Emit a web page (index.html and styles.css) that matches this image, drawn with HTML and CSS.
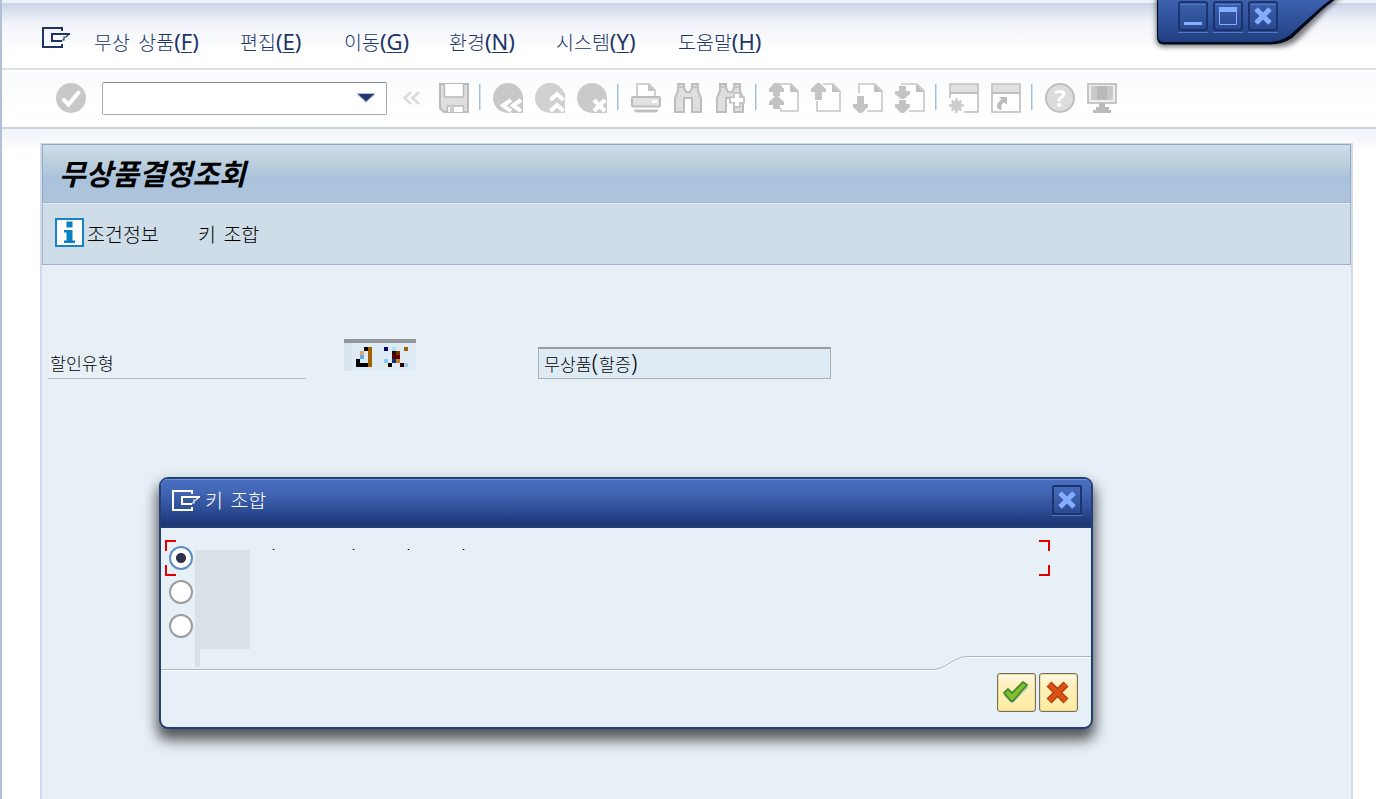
FILE: index.html
```html
<!DOCTYPE html>
<html lang="ko">

<head>
    <meta charset="UTF-8">
    <meta name="viewport" content="width=device-width, initial-scale=1.0">
    <title>무상품결정조회</title>
    <link rel="stylesheet" href="styles.css">
</head>
<body>
    <div class="window">
        <nav class="menubar">
            <svg class="menu-icon" width="28" height="22" viewBox="0 0 28 22" fill="none" stroke="currentColor" stroke-width="2">
                <path d="M20 4V1H1V20H20V17M28 7H10V14H20" />
                <path d="M27 7L24 10H22V13H20" stroke-width="1.2" />
            </svg>
            <ul class="menu">
                <li>무상 상품<b>(<u>F</u>)</b></li>
                <li>편집<b>(<u>E</u>)</b></li>
                <li>이동<b>(<u>G</u>)</b></li>
                <li>환경<b>(<u>N</u>)</b></li>
                <li>시스템<b>(<u>Y</u>)</b></li>
                <li>도움말<b>(<u>H</u>)</b></li>
            </ul>
        </nav>

        <div class="toolbar">
            <svg class="enter" viewBox="0 0 30 30"><circle cx="15" cy="15" r="15" fill="#c8c8c8" /><path d="M8 17L12.500 21.500L22.500 9.500" fill="none" stroke="#fff" stroke-width="4" stroke-linecap="round" /></svg>
            <div class="command">
                <svg width="18" height="10" viewBox="0 0 18 10"><path d="M0 0H18V2L14 5L9 10L4 5L0 2Z" fill="#1f3a70" opacity=".3" /><path d="M1 1H17L14 4L9 8.500L4 4Z" fill="#1f3a70" /></svg>
            </div>
            <svg class="collapse" viewBox="0 0 20 16" fill="none" stroke="#dadada" stroke-width="2.6"><path d="M9 2L2.500 8L9 14M17 2L10.500 8L17 14" /></svg>
            <svg class="icon save" viewBox="0 0 30 30"><path d="M1 1H29V29H5L1 25Z" fill="#dedede" stroke="#bbb" stroke-width="2" /><path d="M5.500 1V14H24.500V1M8.500 29V23H24.500V29" fill="#fff" stroke="#bbb" stroke-width="1.500" /><path d="M11 24H15V29H11Z" fill="#ccc" /></svg>
            <span class="sep"></span>
            <svg class="icon" viewBox="0 0 30 30"><circle cx="15" cy="15" r="15" fill="#c8c8c8" /><path d="M19 14L9 22L19 30H30V14Z" fill="#c8c8c8" /><path d="M18 17L10 22.500L18 28M28 17L20 22.500L28 28" fill="none" stroke="#fff" stroke-width="4" /></svg>
            <svg class="icon" viewBox="0 0 30 30"><circle cx="15" cy="15" r="15" fill="#d0d0d0" /><path d="M14 10H30V30H14Z" fill="#d0d0d0" /><path d="M15.500 17L22 11L28.500 17M15.500 28L22 22L28.500 28" fill="none" stroke="#fff" stroke-width="4" /></svg>
            <svg class="icon" viewBox="0 0 30 30"><circle cx="15" cy="15" r="15" fill="#cacaca" /><path d="M16 16H30V30H16Z" fill="#cacaca" /><path d="M17 17L28 28M28 17L17 28" fill="none" stroke="#fff" stroke-width="4.500" /></svg>
            <span class="sep"></span>
            <svg class="icon" viewBox="0 0 30 30"><path d="M6 14V1H18L24 7V14" fill="#fff" stroke="#c4c4c4" stroke-width="1.500" /><path d="M17 1V8H24Z" fill="#c4c4c4" /><rect x="1" y="14" width="28" height="9.500" rx="1" fill="#e2e2e2" stroke="#bdbdbd" stroke-width="2" /><rect x="21" y="17" width="5" height="3" fill="#fff" /><path d="M3 26.500H27V28L25 29.500H6L3 28Z" fill="#c0c0c0" /></svg>
            <svg class="icon" viewBox="0 0 30 30"><path d="M5 1H11V5L13 9H17L19 5V1H25V8L28 15V29H19V15H11V29H2V15L5 8Z" fill="#dfdfdf" stroke="#bdbdbd" stroke-width="2" /><path d="M5 4H11M19 4H25" stroke="#c4c4c4" stroke-width="2" /></svg>
            <svg class="icon" viewBox="0 0 30 30"><path d="M5 1H11V5L13 9H17L19 5V1H25V8L28 15V29H19V15H11V29H2V15L5 8Z" fill="#dfdfdf" stroke="#bdbdbd" stroke-width="2" /><path d="M5 4H11M19 4H25" stroke="#c4c4c4" stroke-width="2" /><path d="M22 9V25M14 17H30" stroke="#c4c4c4" stroke-width="7" /><path d="M22 11V23M16 17H28" stroke="#fff" stroke-width="4" /></svg>
            <span class="sep"></span>
            <svg class="icon" viewBox="0 0 30 30"><path d="M11 1H22L29 8V28H12V25" fill="#fff" stroke="#c6c6c6" stroke-width="1.600" /><path d="M21 1V9H29Z" fill="#c0c0c0" /><path d="M5 0H10L15 6V9H11V13H4V9H0V6ZM6 13H9L15 19V22H11V26H4V22H0V19Z" fill="#c4c4c4" /></svg>
            <svg class="icon" viewBox="0 0 30 30"><path d="M12 1H22L29 8V28H6V18" fill="#fff" stroke="#c6c6c6" stroke-width="1.600" /><path d="M21 1V9H29Z" fill="#c0c0c0" /><path d="M6 0H9L15 6V9H11V17H4V9H0V6Z" fill="#c4c4c4" /></svg>
            <svg class="icon" viewBox="0 0 30 30"><path d="M6 10V1H22L29 8V28H14" fill="#fff" stroke="#c6c6c6" stroke-width="1.600" /><path d="M21 1V9H29Z" fill="#c0c0c0" /><path d="M4 13H11V21H15V24L9 30H6L0 24V21H4Z" fill="#c4c4c4" /></svg>
            <svg class="icon" viewBox="0 0 30 30"><path d="M6 1H22L29 8V28H14" fill="#fff" stroke="#c6c6c6" stroke-width="1.600" /><path d="M21 1V9H29Z" fill="#c0c0c0" /><path d="M4 3H11V8H15V11L9 16H6L0 11V8H4ZM4 17H11V21H15V24L9 30H6L0 24V21H4Z" fill="#c4c4c4" /></svg>
            <span class="sep"></span>
            <svg class="icon" viewBox="0 0 30 30"><path d="M1 15V1H29V29H15" fill="#fff" stroke="#bdbdbd" stroke-width="1.600" /><path d="M2 2H28V9H2Z" fill="#e0e0e0" /><path d="M1 10H29" stroke="#c0c0c0" stroke-width="2" /><circle cx="7.500" cy="22.500" r="5.200" fill="#ccc" /><path d="M7.500 15V30M0 22.500H15M2.500 17.500L12.500 27.500M12.500 17.500L2.500 27.500" stroke="#ccc" stroke-width="2.400" /></svg>
            <svg class="icon" viewBox="0 0 30 30"><path d="M1 1H29V29H1Z" fill="#fff" stroke="#bdbdbd" stroke-width="1.600" /><path d="M2 2H28V9H2Z" fill="#e0e0e0" /><path d="M1 10H29" stroke="#c0c0c0" stroke-width="2" /><path d="M8 14H16V22L13.500 19.500Q9 21 11 26L9 27Q2 23 10.500 16.500Z" fill="#bdbdbd" /></svg>
            <span class="sep"></span>
            <span class="icon help">?</span>
            <svg class="icon" viewBox="0 0 30 30"><path d="M1 1H29V20H1Z" fill="#efefef" stroke="#b8b8b8" stroke-width="1.600" /><path d="M4 3H26V17H4Z" fill="#c9c9c9" /><path d="M10 3H20V17H10Z" fill="#b9b9b9" /><path d="M12 20H18V24H22V27H24V30H6V27H9V24H12Z" fill="#bbb" /></svg>
        </div>

        <main class="page">
            <section class="screen">
                <h1>무상품결정조회</h1>
                <div class="actions">
                    <svg class="info" viewBox="0 0 29 29"><path d="M1 1H28V28H1Z" fill="#fff" stroke="#1583c4" stroke-width="2" /><path d="M11.500 3.500H17.500V9.500H11.500ZM9 12H17.500V22.500H20V25H9V22.500H11.500V14.500H9Z" fill="#0a7fc2" /></svg>
                    <span class="action-info">조건정보</span>
                    <span>키 조합</span>
                </div>
                <div class="form">
                    <label>할인유형</label>
                    <svg class="code" viewBox="0 0 18 8" shape-rendering="crispEdges">
                        <path d="M0 0H18V8H0Z" fill="#dfebf4" />
                        <path d="M0 1H2V8H0Z" fill="#d9e5ee" />
                        <path d="M0 0H18V1H0Z" fill="#939699" />
                        <path d="M5 2h1v1h-1zM3 5h1v1h2v1h-3zM11 6h1v1h-1z" fill="#000" />
                        <path d="M6 2h1v5h-1zM15 2h1v1h-1z" fill="#a36003" />
                        <path d="M4 3h1v1h-1z" fill="#e1a866" />
                        <path d="M4 4h1v1h-1z" fill="#58aaf5" />
                        <path d="M10 2h1v1h-1z" fill="#00006a" />
                        <path d="M12 2h1v1h-1z" fill="#9ee8f5" />
                        <path d="M12 3h1v1h-1zM14 6h1v1h-1z" fill="#350000" />
                        <path d="M13 3h1v1h-1z" fill="#7d3500" />
                        <path d="M12 4h2v1h-2z" fill="#5a0000" />
                        <path d="M10 5h1v1h-1z" fill="#7ec8fa" />
                        <path d="M12 5h1v1h-1z" fill="#05357f" />
                        <path d="M13 5h1v1h-1z" fill="#c47e38" />
                        <path d="M10 6h1v1h-1z" fill="#e2ecd2" />
                        <path d="M15 6h1v1h-1z" fill="#9fcbf7" />
                    </svg>
                    <div class="field">무상품<b>(</b>할증<b>)</b></div>
                </div>
            </section>
        </main>
    </div>

    <svg class="window-controls" width="210" height="60" viewBox="0 0 210 60">
        <defs>
            <linearGradient id="tab" x1="0" y1="0" x2="0" y2="1">
                <stop offset="0" stop-color="#4064b2" />
                <stop offset="1" stop-color="#203f82" />
            </linearGradient>
            <filter id="tabShadow" x="-10%" y="-20%" width="120%" height="150%"><feGaussianBlur stdDeviation="2.500" /></filter>
        </defs>
        <path d="M6 -4V40Q6 47 14 47H130Q142 46 150 38L180 6L193 -4Z" fill="#000" opacity=".5" filter="url(#tabShadow)" />
        <path d="M7 -3V37Q7 44.500 14 44.500H118Q132 45 142 38L172 10Q180 3 189 -3Z" fill="#03091c" />
        <path d="M8 -3V36Q8 42 14 42H118Q131 42 140 35L170 8Q178 1 185 -3Z" fill="url(#tab)" />
        <g fill="none" stroke="#5479c4">
            <path d="M28 32.500H58M63 32.500H93M98 32.500H128M30 4.500H56M65 4.500H91M100 4.500H126" />
        </g>
        <g fill="none" stroke="#1b3470" stroke-width="2">
            <rect x="29" y="2" width="28" height="28" rx="2" />
            <rect x="64" y="2" width="28" height="28" rx="2" />
            <rect x="99" y="2" width="28" height="28" rx="2" />
        </g>
        <path d="M34 22H52V25H34Z" fill="#86adff" />
        <path d="M69.500 8.500H86.500V24.500H69.500Z" fill="none" stroke="#86adff" />
        <path d="M69 7H87V12H69Z" fill="#86adff" />
        <path d="M106 9L120 23M120 9L106 23" stroke="#86adff" stroke-width="5" />
    </svg>

    <div class="dialog">
        <header class="dialog-title">
            <svg width="28" height="22" viewBox="0 0 28 22" fill="none" stroke="currentColor" stroke-width="2">
                <path d="M20 4V1H1V20H20V17M28 7H10V14H20" />
                <path d="M27 7L24 10H22V13H20" stroke-width="1.2" />
            </svg>
            <span>키 조합</span>
            <svg class="close" width="32" height="32" viewBox="0 0 32 32"><path d="M1 31.500H31" stroke="#5479c4" /><rect x="2" y="2" width="28" height="28" rx="1" fill="none" stroke="#1b3470" stroke-width="2" /><path d="M4 4.500H28" stroke="#4266b2" /><path d="M9 9L23 23M23 9L9 23" stroke="#86adff" stroke-width="5" /></svg>
        </header>
        <div class="dialog-body">
            <div class="radios">
                <i class="radio checked"></i>
                <i class="radio"></i>
                <i class="radio"></i>
            </div>
            <svg class="mask" width="55" height="117" viewBox="0 0 55 117"><path d="M0 0H55V99H5V117H0Z" fill="#dae0e7" /></svg>
            <div class="marks"><i></i><i></i><i></i><i></i></div>
            <svg class="focus" width="885" height="36" viewBox="0 0 885 36" fill="none" stroke="#e10000" stroke-width="2"><path d="M1 11V1H11M1 25V35H11M874 1H884V11M884 25V35H874" /></svg>
        </div>
        <svg class="divider" width="930" height="16" viewBox="0 0 930 16" fill="none">
            <path d="M0 14.500H772Q778 14.500 784 11L794 5Q800 1.500 807 1.500H930" stroke="#fff" />
            <path d="M0 13.500H772Q778 13.500 784 10L794 4Q800 .5 807 .5H930" stroke="#a9b5cb" />
        </svg>
        <footer class="dialog-buttons">
            <button><svg width="26" height="24" viewBox="0 0 26 24"><path d="M3 12L9 18L23 4" fill="none" stroke="#c5cfc0" stroke-width="7" /><path d="M1 12L5 8L9 12L20 1L24 4L10 20H8Z" fill="#86bd28" stroke="#438c38" stroke-width="1.800" /></svg></button>
            <button><svg width="24" height="24" viewBox="0 0 24 24"><path d="M3 3L20 20M20 3L3 20" stroke="#b23a12" stroke-width="7" /><path d="M3.500 3.500L19.500 19.500M19.500 3.500L3.500 19.500" stroke="#dc5413" stroke-width="4.500" /></svg></button>
        </footer>
    </div>
</body>
</html>
```

FILE: styles.css
```css
* {
    box-sizing: border-box;
}

body {
    margin: 0;
    height: 799px;
    position: relative;
    overflow: hidden;
    font-family: 'Noto Sans CJK KR', sans-serif;
    font-weight: 300;
    font-size: 19.5px;
    color: #000;
    background-color: #fff;
}

svg {
    display: block;
    flex: none;
}

b {
    font-family: 'Noto Sans', sans-serif;
    font-weight: 400;
    font-size: 22px;
}

.window {
    height: 799px;
    display: flex;
    flex-direction: column;
    border-left: 2px solid #b3bfd3;
}

.menubar {
    height: 70px;
    display: flex;
    flex: none;
    padding-left: 40px;
    color: #203567;
    border-top: 3px solid #edf2f7;
    border-bottom: 2px solid #dae0e9;
    background: linear-gradient(#c7d3e7, #d7e0ee 10%, #f2f4fa 32%, #fff 75%);
}

.menu-icon {
    margin-top: 24px;
}

.menu {
    list-style: none;
    margin: 0;
    padding: 0 0 0 24px;
    display: grid;
    grid-template-columns: 146px 104px 105px 107px 122px 120px;
    line-height: 78px;
    white-space: nowrap;
    word-spacing: 3px;
}

.menu b {
    line-height: 1;
}

.menu u {
    text-decoration-thickness: 1px;
    text-underline-offset: 2px;
}

.toolbar {
    height: 59px;
    display: flex;
    flex: none;
    align-items: center;
    padding: 0 0 4px 54px;
    border-top: 2px solid #fff;
    border-bottom: 2px solid #cbd3df;
    background: linear-gradient(#f8fafc, #fff 70%);
}

.enter {
    width: 30px;
    height: 30px;
}

.command {
    width: 285px;
    height: 33px;
    margin: 2px 0 0 16px;
    padding: 0 11px 2px 0;
    display: flex;
    align-items: center;
    justify-content: flex-end;
    border: 1px solid #a6aaad;
    border-top-color: #85898d;
    border-radius: 2px;
    background-color: #fff;
}

.collapse {
    width: 20px;
    height: 16px;
    margin-left: 15px;
}

.icon {
    width: 30px;
    height: 30px;
    margin-left: 12px;
    flex: none;
}

.save {
    margin-left: 17px;
}

.sep {
    width: 2px;
    height: 26px;
    margin: 0 0 1px 10px;
    background: linear-gradient(90deg, #9cc1df 50%, #d5e2ee 50%);
}

.help {
    border: 2px solid #bfbfbf;
    border-radius: 50%;
    background-color: #dcdcdc;
    color: #fff;
    font: bold 24px/26px 'Noto Sans', sans-serif;
    text-align: center;
}

.page {
    flex: 1;
    padding: 14px 23px 0 38px;
    background: linear-gradient(#eff3f8, #fff 24px);
}

.screen {
    height: 100%;
    border: 2px solid #d3dae7;
    border-width: 1px 2px 0;
    background-color: #e8f0f7;
}

h1 {
    height: 58px;
    margin: 0;
    padding-left: 16px;
    border: 1px solid #91a9c3;
    border-bottom: 0;
    background: linear-gradient(#cfdeec, #bed1dd 28%, #aac2db 60%, #adc4db);
    font-size: 29px;
    font-weight: 700;
    font-style: italic;
    line-height: 54px;
}

.actions {
    height: 63px;
    display: flex;
    align-items: center;
    padding: 0 0 2px 12px;
    border: 1px solid #a1b4c9;
    background-color: #cfdde8;
    box-shadow: inset 0 1px #e5edf4;
    word-spacing: 2px;
}

.actions span {
    padding-top: 2px;
}

.info {
    width: 29px;
    height: 29px;
    margin-right: 3px;
}

.action-info {
    width: 111px;
}

.form {
    display: flex;
    align-items: flex-start;
    padding: 74px 0 0 6px;
    font-size: 17.3px;
}

.form label {
    width: 258px;
    height: 32px;
    margin-top: 8px;
    padding-left: 2px;
    line-height: 31px;
    border-bottom: 1px solid #b1b8bd;
}

.code {
    width: 72px;
    height: 32px;
    margin-left: 38px;
}

.field {
    width: 293px;
    height: 32px;
    margin: 8px 0 0 122px;
    padding-left: 5px;
    line-height: 29px;
    border: 1px solid #aab0b4;
    border-top: 2px solid #989da1;
    background-color: #dfebf4;
}

.field b {
    font-size: 23px;
    font-weight: 300;
    line-height: 1;
    letter-spacing: 1px;
}

.window-controls {
    position: absolute;
    top: 0;
    left: 1150px;
}

.dialog {
    position: absolute;
    top: 477px;
    left: 159px;
    width: 934px;
    height: 252px;
    display: flex;
    flex-direction: column;
    overflow: hidden;
    border: 2px solid #233f77;
    border-radius: 9px;
    background-color: #e8f0f7;
    box-shadow: 0 9px 14px 2px rgba(0, 0, 0, .65);
}

.dialog-title {
    height: 49px;
    display: flex;
    flex: none;
    align-items: center;
    padding: 0 8px 6px 11px;
    color: #fff;
    background: linear-gradient(#4a6fc2, #4265b4 28%, #28478d 72%, #1d3673 92%, #22417c);
    box-shadow: inset 0 1px #7294d6;
    word-spacing: 2px;
}

.dialog-title span {
    margin: 0 0 2px 5px;
}

.close {
    margin: 0 0 1px auto;
}

.dialog-body {
    height: 128px;
    display: flex;
    position: relative;
    padding: 18px 0 0 8px;
}

.radios {
    display: flex;
    flex-direction: column;
    gap: 10px;
}

.radio {
    width: 24px;
    height: 24px;
    border: 2px solid #9b9d9f;
    border-radius: 50%;
    background-color: #fff;
}

.checked {
    border-color: #5d8dc4;
    background: radial-gradient(circle, #30304a 4.5px, #fff 5.5px);
}

.mask {
    margin: 4px 0 0 2px;
}

.marks {
    display: grid;
    grid-template-columns: 80px 55px 55px 3px;
    height: 1px;
    margin: 3px 0 0 22px;
}

.marks i {
    width: 3px;
    height: 1px;
    background: linear-gradient(90deg, #e1b080 1px, #000 1px, #000 2px, #8fb5df 2px);
}

/* selection corners over the first row */
.focus {
    position: absolute;
    top: 12px;
    left: 4px;
}

.divider {
    flex: none;
}

.dialog-buttons {
    display: flex;
    justify-content: flex-end;
    gap: 3px;
    padding: 1px 13px 0 0;
}

.dialog-buttons button {
    width: 39px;
    height: 39px;
    padding: 0 2px 0 0;
    display: flex;
    align-items: center;
    justify-content: center;
    border: 1px solid #746e60;
    border-radius: 3px;
    background: linear-gradient(#fffbee, #fff0bd 28%, #ffeca0);
    box-shadow: inset 0 0 0 1px #f0dc93;
}
```
